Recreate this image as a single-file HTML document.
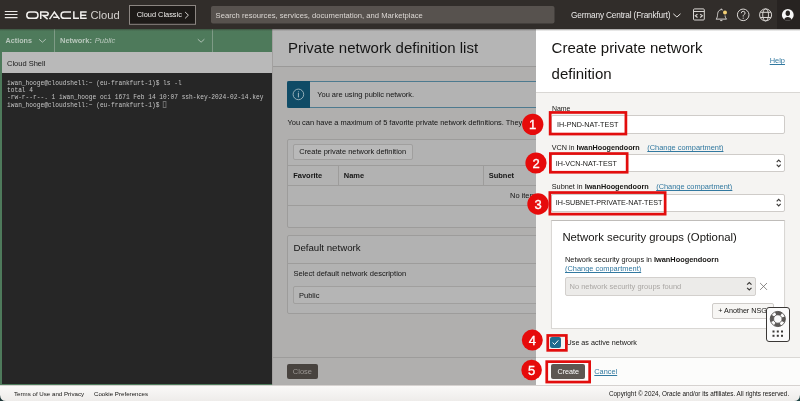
<!DOCTYPE html>
<html><head><meta charset="utf-8">
<style>
*{box-sizing:border-box;margin:0;padding:0}
html,body{width:800px;height:401px;overflow:hidden;background:#f0eeec;font-family:"Liberation Sans",sans-serif}
.a{position:absolute}
.t{position:absolute;white-space:nowrap;line-height:1}
#top{left:0;top:0;width:800px;height:29px;background:#312d2a}
#green{left:0;top:29px;width:272px;height:23px;background:#4e7a5b}
#cshead{left:2px;top:52px;width:270px;height:21px;background:#b9b9b9}
#term{left:2px;top:73px;width:270px;height:312px;background:#262626}
#lborder{left:0;top:52px;width:2px;height:333px;background:#4e7a5b}
#mid{left:272px;top:29px;width:264px;height:356px;background:#b0afae;border-left:1px solid #a2a09f}
#midhead{left:273px;top:29px;width:263px;height:37.5px;background:#b5b5b5;border-bottom:1px solid #9a9998}
#drawer{left:536px;top:29px;width:264px;height:356px;background:#f5f4f2;box-shadow:-0.5px 0 1px rgba(0,0,0,0.12)}
#foot{left:0;top:385px;width:800px;height:16px;background:linear-gradient(#faf9f8,#eeecea);border-top:1px solid #d6d2d0}
u,.t{text-decoration-skip-ink:none}
.mono{font-family:"Liberation Mono",monospace}
</style></head><body><div style="position:absolute;left:0;top:0;width:800px;height:401px;will-change:transform">
<div class="a" id="top"></div>
<div class="a" id="green"></div>
<div class="a" id="cshead"></div>
<div class="a" id="term"></div>
<div class="a" id="lborder"></div>
<div class="a" id="mid"></div>
<div class="a" id="midhead"></div>


<!-- GREEN BAR / CLOUD SHELL -->
<svg class="a" style="left:0;top:29px" width="272" height="23" viewBox="0 29 272 23">
 <path d="M54.5 29V52M212.5 29V52" stroke="#7e9b86" stroke-width="1"/>
 <path d="M39 39.2L42.4 42.2L45.8 39.2M197.8 39.2L201.1 42.2L204.4 39.2" stroke="#b8c7bc" stroke-width="0.9" fill="none"/>
</svg>
<div class="t" style="left:5.6px;top:37.2px;font-size:7.2px;font-weight:bold;color:#b8c7bc">Actions</div>
<div class="t" style="left:60px;top:37.2px;font-size:7.46px;font-weight:bold;color:#b8c7bc">Network: <span style="font-weight:normal;font-style:italic;margin-left:0.8px;font-size:7.52px">Public</span></div>
<div class="t" style="left:7px;top:59.5px;font-size:7.5px;color:#1a1a1a">Cloud Shell</div>
<div class="t mono" style="left:6.9px;top:80.2px;font-size:6.8px;line-height:7.05px;color:#c4c4c4;white-space:pre;transform:scaleX(0.911);transform-origin:0 0">iwan_hooge@cloudshell:~ (eu-frankfurt-1)$ ls -l
total 4
-rw-r--r--. 1 iwan_hooge oci 1671 Feb 14 10:07 ssh-key-2024-02-14.key
iwan_hooge@cloudshell:~ (eu-frankfurt-1)$ <span style="display:inline-block;width:3.6px;height:7px;border:0.8px solid #6e6e6e;vertical-align:-1.5px"></span></div>


<!-- MIDDLE PANEL -->
<div class="t" style="left:288px;top:39.5px;font-size:15px;color:#141414">Private network definition list</div>
<div class="a" style="left:287px;top:81.2px;width:249px;height:26.5px;background:#b3b3b3;border:1px solid #4d7a8f;border-right:none;border-radius:2px 0 0 2px"></div>
<div class="a" style="left:287.2px;top:81.2px;width:22.4px;height:26.5px;background:#0f4b66;border-radius:2px 0 0 2px"></div>
<svg class="a" style="left:287px;top:81px" width="23" height="27" viewBox="287 81 23 27"><circle cx="298.4" cy="94.4" r="5.3" fill="none" stroke="#b3c4cc" stroke-width="0.8"/><path d="M298.4 92.9V97.4" stroke="#b3c4cc" stroke-width="0.9"/><circle cx="298.4" cy="91.7" r="0.5" fill="#b3c4cc"/></svg>
<div class="t" style="left:317.25px;top:90.8px;font-size:7.45px;color:#141414">You are using public network.</div>
<div class="t" style="left:287.5px;top:119.3px;font-size:7.45px;color:#141414">You can have a maximum of 5 favorite private network definitions. They</div>
<div class="a" style="left:287.3px;top:138.6px;width:260px;height:89px;background:#b2b2b2;border:1px solid #9d9c9b;border-radius:2px"></div>
<div class="a" style="left:293px;top:144px;width:119.5px;height:15.5px;background:#b9b9b9;border:1px solid #a09f9e;border-radius:2px"></div>
<div class="t" style="left:299.25px;top:148.2px;font-size:7.46px;color:#141414">Create private network definition</div>
<div class="a" style="left:288px;top:165px;width:248px;height:1px;background:#9d9c9b"></div>
<div class="a" style="left:288px;top:184.6px;width:248px;height:1px;background:#9d9c9b"></div>
<div class="a" style="left:288px;top:205.2px;width:248px;height:1px;background:#9d9c9b"></div>
<div class="a" style="left:338px;top:165px;width:1px;height:20px;background:#9d9c9b"></div>
<div class="a" style="left:482.5px;top:165px;width:1px;height:20px;background:#9d9c9b"></div>
<div class="t" style="left:293.25px;top:172.3px;font-size:7.46px;font-weight:bold;color:#141414">Favorite</div>
<div class="t" style="left:343.75px;top:172.3px;font-size:7.46px;font-weight:bold;color:#141414">Name</div>
<div class="t" style="left:488.8px;top:172.3px;font-size:7.46px;font-weight:bold;color:#141414">Subnet</div>
<div class="t" style="left:510px;top:192.2px;font-size:7.46px;color:#141414">No items</div>
<div class="a" style="left:287px;top:235px;width:260px;height:78.6px;background:#b2b2b2;border:1px solid #9d9c9b;border-radius:2px"></div>
<div class="a" style="left:288px;top:263px;width:248px;height:1px;background:#9d9c9b"></div>
<div class="t" style="left:293.4px;top:243.3px;font-size:9.68px;color:#141414">Default network</div>
<div class="t" style="left:293.4px;top:270.3px;font-size:7.56px;color:#141414">Select default network description</div>
<div class="a" style="left:293.4px;top:285.8px;width:250px;height:18.6px;background:#b5b5b5;border:1px solid #a09f9e;border-radius:2px"></div>
<div class="t" style="left:299px;top:292px;font-size:7.5px;color:#141414">Public</div>
<div class="a" style="left:273px;top:357px;width:263px;height:1px;background:#9d9c9b"></div>
<div class="a" style="left:287.2px;top:364px;width:30.7px;height:15.4px;background:#48433f;border-radius:2px"></div>
<div class="t" style="left:292.8px;top:368.4px;font-size:7.5px;color:#9b9794">Close</div>

<!-- TOP BAR -->
<svg class="a" style="left:0;top:0" width="800" height="29" viewBox="0 0 800 29">
 <g stroke="#eceae8" stroke-width="1.2" fill="none">
  <path d="M4.8 11.5H17.5M4.8 14.5H17.5M4.8 17.6H17.5"/>
 </g>
 <g stroke="#f2f0ee" stroke-width="1.5" fill="none">
  <rect x="26.8" y="12.05" width="11.2" height="6.3" rx="3.15"/>
  <path d="M40.75 19.1V12.05H45.9Q48.2 12.05 48.2 13.8Q48.2 15.6 45.9 15.6H43.2L47.6 19.1"/>
  <path d="M49.5 19.1L54.4 12L59.5 19.1M53.2 17.3H58.3"/>
  <path d="M71 12.05H64.2A3.15 3.15 0 0 0 64.2 18.35H71"/>
  <path d="M73.85 11.3V18.35H79"/>
  <path d="M86.7 12.05H80.85V18.35H86.7M80.85 15.2H86.2"/>
 </g>
 <rect x="129.5" y="5.5" width="66" height="18.8" fill="#1d1a18" stroke="#8c8682" stroke-width="1"/>
 <path d="M185.1 12L188.4 15.2L185.1 18.4" stroke="#e6e3e0" stroke-width="0.9" fill="none"/>
 <rect x="211" y="6" width="343.5" height="17.5" rx="2" fill="#57524e"/>
 <path d="M673.3 13.8L676.9 17L680.5 13.8" stroke="#e6e3e0" stroke-width="1" fill="none"/>
 <g stroke="#d9d6d3" stroke-width="1" fill="none">
  <rect x="693.5" y="8.9" width="10.8" height="11.1" rx="1"/>
  <path d="M693.5 11.5H704.3"/>
  <path d="M697.5 14.1L695.3 15.8L697.5 17.5M700.2 14.1L702.4 15.8L700.2 17.5" stroke-width="1.1"/>
  <path d="M721.3 9.6C718 10.2 717.6 13 717.5 15.5C717.4 17.2 716.8 18.3 716 19.1H726.6C725.8 18.3 725.2 17.2 725.1 15.5C725 13 724.6 10.2 721.3 9.6M720.2 20.6H722.4M721.3 8.6V9.6"/>
  <circle cx="743.2" cy="14.85" r="5.8"/>
  <path d="M741.3 13.2Q741.3 11.3 743.2 11.3Q745.1 11.3 745.1 13Q745.1 14.2 743.9 14.7Q743.2 15.1 743.2 16.1V16.6"/>
  <circle cx="765.6" cy="14.9" r="6"/>
  <ellipse cx="765.6" cy="14.9" rx="2.9" ry="6"/>
  <path d="M760.3 12.3H770.9M760.3 17.5H770.9"/>
 </g>
 <circle cx="743.2" cy="18.2" r="0.6" fill="#d9d6d3"/><circle cx="725" cy="12.5" r="2.9" fill="#312d2a"/><circle cx="725" cy="12.5" r="2" fill="#f2cf74"/>
 <rect x="777" y="0" width="23" height="29" fill="#272321"/>
 <circle cx="787.8" cy="14.9" r="5.9" fill="#f7f7f7"/>
 <ellipse cx="787.8" cy="13.3" rx="2.2" ry="2.7" fill="#272321"/>
 <path d="M784.2 19.6Q784.8 17 787.8 17Q790.8 17 791.4 19.6Q789.8 20.8 787.8 20.8Q785.8 20.8 784.2 19.6Z" fill="#272321"/>
</svg>
<div class="t" style="left:90.5px;top:10px;font-size:11.2px;color:#d4d1ce">Cloud</div>
<div class="t" style="left:136.7px;top:11px;font-size:7.4px;color:#f0eeec">Cloud Classic</div>
<div class="t" style="left:215.6px;top:11.7px;font-size:7.65px;color:#dcd8d4">Search resources, services, documentation, and Marketplace</div>
<div class="t" style="left:571px;top:10.6px;font-size:8.3px;letter-spacing:-0.18px;color:#ecebea">Germany Central (Frankfurt)</div>


<!-- DRAWER -->
<div class="a" id="drawer"></div>
<div class="a" id="foot"></div>

<div class="a" style="left:536px;top:29px;width:264px;height:63.5px;background:#fff;border-bottom:1px solid #d9d7d4"></div>
<div class="t" style="left:551.6px;top:35px;font-size:15px;line-height:25.6px;color:#161513;white-space:normal;width:200px">Create private network definition</div>
<div class="t" style="left:769.7px;top:56.5px;font-size:7.45px;color:#3279a0;text-decoration:underline">Help</div>
<div class="t" style="left:551.9px;top:106.2px;font-size:6.94px;color:#161513">Name</div>
<div class="a" style="left:551px;top:115px;width:233.7px;height:18.5px;background:#fff;border:1px solid #cfccc9;border-radius:2px"></div>
<div class="t" style="left:557.1px;top:120.7px;font-size:7.2px;color:#161513">IH-PND-NAT-TEST</div>
<div class="t" style="left:551.7px;top:144.3px;font-size:7.21px;color:#161513">VCN in <b>IwanHoogendoorn</b></div>
<div class="t" style="left:647.3px;top:144.3px;font-size:7.42px;color:#3279a0;text-decoration:underline">(Change compartment)</div>
<div class="a" style="left:551px;top:154.4px;width:233.7px;height:18.1px;background:#fff;border:1px solid #cfccc9;border-radius:2px"></div>
<div class="t" style="left:555.75px;top:161.1px;font-size:7.16px;color:#161513">IH-VCN-NAT-TEST</div>
<div class="t" style="left:551.7px;top:183.4px;font-size:7.32px;color:#161513">Subnet in <b>IwanHoogendoorn</b></div>
<div class="t" style="left:656.2px;top:183.4px;font-size:7.42px;color:#3279a0;text-decoration:underline">(Change compartment)</div>
<div class="a" style="left:551px;top:193.8px;width:233.7px;height:18.2px;background:#fff;border:1px solid #cfccc9;border-radius:2px"></div>
<div class="t" style="left:555.75px;top:200.2px;font-size:7.16px;color:#161513">IH-SUBNET-PRIVATE-NAT-TEST</div>
<svg class="a" style="left:770px;top:150px" width="20" height="70" viewBox="770 150 20 70">
 <path d="M776.7 162.1L778.7 160.1L780.7 162.1M776.7 164.7L778.7 166.7L780.7 164.7M776.7 201.3L778.7 199.3L780.7 201.3M776.7 203.9L778.7 205.9L780.7 203.9" stroke="#3a3836" stroke-width="1.15" fill="none"/>
</svg>
<!-- NSG -->
<div class="a" style="left:551px;top:219.5px;width:234px;height:109.5px;background:#fff;border:1px solid #d9d7d4;border-top:1px solid #bfbcb9;box-shadow:0 -0.5px 1px rgba(0,0,0,0.1)"></div>
<div class="t" style="left:562.4px;top:232px;font-size:11.34px;color:#161513">Network security groups (Optional)</div>
<div class="t" style="left:565px;top:255.9px;font-size:7.38px;color:#161513">Network security groups in <b>IwanHoogendoorn</b></div>
<div class="t" style="left:565px;top:265.4px;font-size:7.42px;color:#3279a0;text-decoration:underline">(Change compartment)</div>
<div class="a" style="left:565px;top:277px;width:190.5px;height:18.5px;background:#ecebe9;border:1px solid #d3d0cd;border-radius:2px"></div>
<div class="t" style="left:569.5px;top:282.8px;font-size:7.5px;color:#aaa7a4">No network security groups found</div>
<svg class="a" style="left:740px;top:275px" width="30" height="22" viewBox="740 275 30 22">
 <path d="M747.1 284.6L749.3 282.5L751.5 284.6M747.1 287.9L749.3 290L751.5 287.9" stroke="#3a3836" stroke-width="1.15" fill="none"/>
 <path d="M760.1 283L767 289.9M767 283L760.1 289.9" stroke="#6f6c69" stroke-width="0.8" fill="none"/>
</svg>
<div class="a" style="left:712.3px;top:302.5px;width:61.7px;height:16.3px;background:#f7f6f4;border:1px solid #cfccc9;border-radius:2px"></div>
<div class="t" style="left:718.3px;top:306.8px;font-size:7.2px;color:#161513">+ Another NSG</div>
<!-- checkbox -->
<div class="a" style="left:549.7px;top:336.9px;width:11.3px;height:11.2px;background:#1f6b8e;border-radius:2px"></div>
<svg class="a" style="left:549px;top:336px" width="13" height="13" viewBox="549 336 13 13"><path d="M552.6 342.6L554.6 344.5L558.3 340.4" stroke="#fff" stroke-width="1" fill="none"/></svg>
<div class="t" style="left:566.6px;top:339px;font-size:7.2px;color:#161513">Use as active network</div>
<!-- drawer footer -->
<div class="a" style="left:536px;top:357px;width:264px;height:28px;background:#fcfcfb;border-top:1px solid #dad8d5"></div>
<div class="a" style="left:551.2px;top:364px;width:33.6px;height:15.2px;background:#5d5752;border-radius:2px"></div>
<div class="t" style="left:557.5px;top:368px;font-size:7.2px;color:#fff">Create</div>
<div class="t" style="left:594.3px;top:367.9px;font-size:7.35px;color:#3279a0;text-decoration:underline">Cancel</div>
<!-- help widget -->
<div class="a" style="left:766.2px;top:307px;width:23.6px;height:34.8px;background:#fbfbfb;border:1.3px solid #3b3836;border-radius:3px"></div>
<svg class="a" style="left:766px;top:307px" width="24" height="35" viewBox="766 307 24 35">
 <circle cx="777.8" cy="319" r="5.9" fill="none" stroke="#5c5957" stroke-width="3.1" stroke-dasharray="5.97 3.3" stroke-dashoffset="2.98"/>
 <circle cx="777.8" cy="319" r="7.6" fill="none" stroke="#3b3836" stroke-width="0.75"/>
 <circle cx="777.8" cy="319" r="4.2" fill="none" stroke="#3b3836" stroke-width="0.7"/>
 <g fill="#3b3836"><rect x="772.5" y="330.5" width="2" height="2"/><rect x="776.8" y="330.5" width="2" height="2"/><rect x="781" y="330.5" width="2" height="2"/><rect x="772.5" y="334.8" width="2" height="2"/><rect x="776.8" y="334.8" width="2" height="2"/><rect x="781" y="334.8" width="2" height="2"/></g>
</svg>
<!-- annotations -->
<svg class="a" style="left:500px;top:100px" width="200" height="290" viewBox="500 100 200 290">
 <g fill="none" stroke="#e20d0d" stroke-width="2.7">
  <rect x="550.15" y="112.45" width="75.75" height="21.6"/>
  <rect x="550.35" y="153.55" width="76.8" height="18.7"/>
  <rect x="549.85" y="192.55" width="115.3" height="21.6"/>
  <rect x="547.75" y="335.45" width="18.6" height="14.9"/>
  <rect x="546.75" y="361.65" width="42.9" height="20.4"/>
 </g>
 <g fill="#e60b0b">
  <circle cx="532.75" cy="124.35" r="10.65"/>
  <circle cx="536" cy="163" r="10.6"/>
  <circle cx="538" cy="204" r="10.7"/>
  <circle cx="532.3" cy="340.1" r="10.5"/>
  <circle cx="531.6" cy="370" r="10.3"/>
 </g>
 <g fill="#fff" stroke="#fff" stroke-width="0.35" font-family="Liberation Sans" font-size="13" text-anchor="middle">
  <text x="532.6" y="129.3">1</text>
  <text x="536" y="167.8">2</text>
  <text x="538" y="208.8">3</text>
  <text x="532.3" y="344.8">4</text>
  <text x="531.6" y="374.7">5</text>
 </g>
</svg>
<div class="a" style="left:0;top:29px;width:800px;height:1.5px;background:linear-gradient(rgba(40,36,33,0.45),rgba(40,36,33,0))"></div>
<!-- FOOTER -->
<div class="a" style="left:0;top:383.5px;width:272px;height:1.5px;background:#4e7a5b"></div>
<svg class="a" style="left:0;top:393px" width="8" height="8" viewBox="0 393 8 8"><path d="M0 395Q0.5 401 6 401H0Z" fill="#1d3436"/></svg>
<svg class="a" style="left:792px;top:393px" width="8" height="8" viewBox="792 393 8 8"><path d="M800 395Q799.5 401 794 401H800Z" fill="#1d4444"/></svg>

<div class="t" style="left:14px;top:391px;font-size:6.16px;color:#161513">Terms of Use and Privacy</div>
<div class="t" style="left:94px;top:391px;font-size:6.16px;color:#161513">Cookie Preferences</div>
<div class="t" style="left:609px;top:391px;font-size:6.35px;color:#161513">Copyright © 2024, Oracle and/or its affiliates. All rights reserved.</div>
</div></body></html>
